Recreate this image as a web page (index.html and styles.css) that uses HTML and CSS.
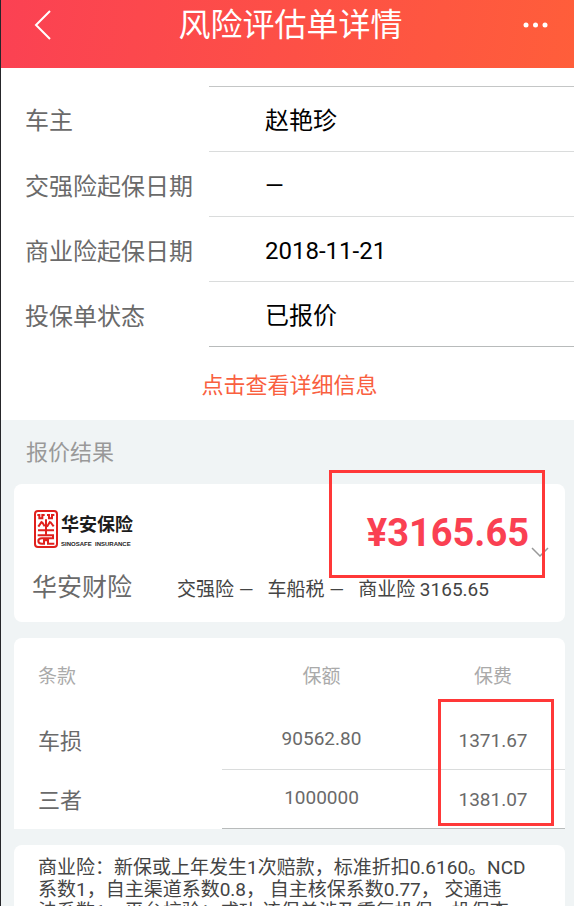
FILE: index.html
```html
<!DOCTYPE html>
<html lang="zh-CN">
<head>
<meta charset="utf-8">
<meta name="viewport" content="width=device-width, initial-scale=1">
<title>风险评估单详情</title>
<link rel="stylesheet" href="styles.css">
</head>
<body>
<div class="app">
  <header class="topbar">
    <button class="icon-button" type="button" aria-label="返回">
      <svg width="18" height="30" viewBox="0 0 18 30" fill="none" stroke="#fff" stroke-width="2"><path d="M17 1 3 15l14 14"/></svg>
    </button>
    <h1 class="topbar-title">风险评估单详情</h1>
    <button class="icon-button icon-button-end" type="button" aria-label="更多">
      <svg width="26" height="6" viewBox="0 0 26 6" fill="#fff"><circle cx="4" cy="3" r="2.5"/><circle cx="13.5" cy="3" r="2.5"/><circle cx="23" cy="3" r="2.5"/></svg>
    </button>
  </header>

  <main class="content">
    <section class="summary">
      <dl class="fields">
        <div class="field"><dt>车主</dt><dd>赵艳珍</dd></div>
        <div class="field"><dt>交强险起保日期</dt><dd>—</dd></div>
        <div class="field"><dt>商业险起保日期</dt><dd>2018-11-21</dd></div>
        <div class="field"><dt>投保单状态</dt><dd>已报价</dd></div>
      </dl>
      <button class="detail-button" type="button">点击查看详细信息</button>
    </section>

    <section class="results">
      <h2 class="results-title">报价结果</h2>

      <article class="card quote">
        <div class="quote-main">
          <div class="logo">
            <svg class="logo-seal" width="24" height="38" viewBox="0 0 72 114" fill="none" stroke="#e0201c" stroke-width="6">
              <rect x="3" y="3" width="66" height="108" rx="9"/>
              <path d="M10 15h6v10h9V15h7M39 15h6v10h9V15h7"/>
              <path d="M36 28v49M12 61h48M24 34 13 50M24 36l8 13M49 34 39 50M49 36l10 13"/>
              <path d="M11 76h46v9H24q-11 0-11 8t11 8h6V91h12v10h19"/>
            </svg>
            <div class="logo-text">
              <span class="logo-name">华安保险</span>
              <span class="logo-latin">SINOSAFE &nbsp;INSURANCE</span>
            </div>
          </div>
          <strong class="price">¥3165.65</strong>
          <button class="expand" type="button" aria-label="展开">
            <svg width="18" height="10" viewBox="0 0 18 10" fill="none" stroke="#999" stroke-width="1.5"><path d="m1 1 8 8 8-8"/></svg>
          </button>
        </div>
        <div class="quote-sub">
          <span class="company">华安财险</span>
          <span class="breakdown"><span>交强险 —</span><span>车船税 —</span><span>商业险 3165.65</span></span>
        </div>
        <div class="mark mark-price"></div>
      </article>

      <div class="card terms">
        <table class="terms-table">
          <thead>
            <tr><th class="col-name" scope="col">条款</th><th scope="col">保额</th><th class="col-fee" scope="col">保费</th></tr>
          </thead>
          <tbody>
            <tr><th scope="row">车损</th><td class="amount">90562.80</td><td>1371.67</td></tr>
            <tr><th scope="row">三者</th><td class="amount">1000000</td><td>1381.07</td></tr>
          </tbody>
        </table>
        <div class="mark mark-fees"></div>
      </div>

      <p class="card note">商业险：新保或上年发生1次赔款，标准折扣0.6160。NCD<br>系数1，自主渠道系数0.8， 自主核保系数0.77， 交通违<br>法系数1，平台校验：成功;该保单涉及重复投保，投保查</p>
    </section>
  </main>
</div>
</body>
</html>
```
FILE: styles.css
```css
* {
  box-sizing: border-box;
}

body {
  margin: 0;
  color: #6a6a6a;
  font-family: Roboto, "Noto Sans CJK SC", sans-serif;
}

button {
  padding: 0;
  border: 0;
  background: none;
  font: inherit;
}

svg {
  display: block;
}

.app {
  display: flex;
  flex-direction: column;
  height: 100vh;
  border-left: 1px solid #26262a;
  background: #fff;
}

.topbar {
  display: grid;
  grid-template-columns: 64px 1fr 64px;
  align-items: center;
  flex: none;
  padding: 0 26px 18px 32px;
  background: linear-gradient(100deg, #fb4153, #ff5e3a);
}

.topbar-title {
  margin: 0;
  color: #fff;
  font-size: 32px;
  font-weight: 400;
  line-height: 50px;
  text-align: center;
  white-space: nowrap;
}

.icon-button-end {
  justify-self: end;
}

.content {
  display: flex;
  flex: 1;
  flex-direction: column;
  min-height: 0;
  overflow-y: auto;
  scrollbar-width: none;
}

.summary {
  flex: none;
  padding-top: 18px;
}

.fields {
  margin: 0;
}

.field {
  display: grid;
  grid-template-columns: 208px 1fr;
  font-size: 24px;
  line-height: 60px;
}

.field dt {
  padding: 5px 0 0 24px;
  white-space: nowrap;
}

.field dd {
  margin: 0;
  padding: 4px 0 0 56px;
  border-bottom: 1px solid #dadcdc;
  color: #000;
}

.field:first-child dd {
  border-top: 1px solid #c4c6c6;
}

.field:last-child dd {
  border-bottom-color: #b8bbbb;
}

.detail-button {
  display: block;
  margin: 0 auto;
  padding: 5px 0 0 4px;
  color: #f9603f;
  font-size: 22px;
  line-height: 68px;
}

.results {
  flex: 1 0 auto;
  padding: 0 9px 16px 13px;
  background: #f0f4f5;
}

.results-title {
  margin: 0;
  padding: 2px 0 0 12px;
  color: #999;
  font-size: 22px;
  font-weight: 400;
  line-height: 62px;
}

.card {
  position: relative;
  margin: 0 0 16px;
  border-radius: 8px;
  background: #fff;
}

.quote {
  padding: 25px 16px 13px 18px;
}

.quote-main {
  display: flex;
  align-items: center;
  height: 48px;
}

.logo {
  display: flex;
  gap: 3px;
  margin: 0 auto 8px 2px;
}

.logo-text {
  display: flex;
  flex-direction: column;
  justify-content: space-between;
  color: #1c1c1c;
  font-weight: 700;
  white-space: nowrap;
}

.logo-name {
  font-size: 18px;
  line-height: 30px;
}

.logo-latin {
  font-family: "Liberation Sans", sans-serif;
  font-size: 6px;
  line-height: 8px;
}

.price {
  color: #fa4052;
  font-size: 38px;
  line-height: 48px;
}

.expand {
  align-self: flex-end;
  margin: 0 0 0 2px;
}

.quote-sub {
  display: flex;
  align-items: center;
  gap: 45px;
  padding-top: 9px;
  line-height: 40px;
  white-space: nowrap;
}

.quote-sub + .mark {
  z-index: 1;
}

.company {
  font-size: 25px;
}

.breakdown {
  display: flex;
  gap: 14px;
  padding-top: 4px;
  color: #444;
  font-size: 19px;
}

.mark {
  position: absolute;
  border: 3px solid #ff3838;
  pointer-events: none;
}

.mark-price {
  top: -14px;
  right: 20px;
  width: 216px;
  height: 108px;
}

.mark-fees {
  top: 61px;
  right: 11px;
  bottom: 3px;
  width: 116px;
}

.quote {
  padding-bottom: 12px;
}

.terms {
  border-radius: 8px 8px 0 0;
}

.terms-table {
  width: 100%;
  border-collapse: separate;
  border-spacing: 0;
  table-layout: fixed;
  font-size: 19px;
  text-align: center;
}

.terms-table th,
.terms-table td {
  height: 59px;
  padding: 0;
  font-weight: 400;
}

.terms-table thead th {
  height: 73px;
  color: #aaa;
}

.terms-table .col-name {
  width: 208px;
}

.terms-table .col-fee {
  width: 144px;
}

.terms-table th:first-child {
  padding-left: 24px;
  text-align: left;
}

.terms-table tbody th:first-child {
  padding-bottom: 4px;
  font-size: 22px;
}

.terms-table td {
  border-bottom: 1px solid #dadcdc;
}

.terms-table .amount {
  padding-bottom: 4px;
}

.terms-table tr:last-child td {
  border-bottom-color: #b8bbbb;
}

.note {
  padding: 12px 0 12px 24px;
  color: #444;
  font-size: 19px;
  line-height: 22px;
  white-space: nowrap;
}
```
